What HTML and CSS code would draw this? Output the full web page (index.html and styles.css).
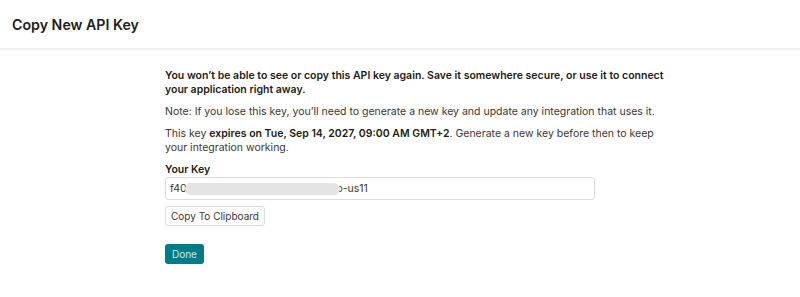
FILE: index.html
```html
<!DOCTYPE html>
<html>
<head>
<meta charset="utf-8">
<link rel="stylesheet" href="styles.css">
</head>
<body>
<header class="top">
  <h1 class="title">Copy New API Key</h1>
</header>
<main class="content">
  <p class="warn">You won’t be able to see or copy this API key again. Save it somewhere secure, or use it to connect your application right away.</p>
  <p class="note">Note: If you lose this key, you’ll need to generate a new key and update any integration that uses it.</p>
  <p class="note">This key <strong>expires on Tue, Sep 14, 2027, 09:00 AM GMT+2</strong>. Generate a new key before then to keep your integration working.</p>
  <label class="label">Your Key</label>
  <div class="field"><span class="k">f40(</span><span class="blur"></span><span class="k">o-us11</span></div>
  <div class="row"><button class="btn">Copy To Clipboard</button></div>
  <div class="row actions"><button class="primary">Done</button></div>
</main>
</body>
</html>
```
FILE: styles.css
```css
* { box-sizing: border-box; }
body {
  margin: 0;
  background: #fff;
  font-family: Inter, "Noto Sans", sans-serif;
  color: #241c15;
}
.top {
  height: 50px;
  border-bottom: 2px solid #eff2f2;
  padding: 0 12px;
  display: flex;
  align-items: center;
}
.title {
  margin: 0;
  font-size: 14.2px;
  font-weight: 600;
  color: #241c15;
}
.content {
  width: 430px;
  margin: 0 0 0 165px;
  padding-top: 19px;
}
.warn {
  margin: 0 0 8px;
  font-size: 10.5px;
  line-height: 14px;
  font-weight: 600;
  width: 510px;
}
.note {
  margin: 0 0 8px;
  font-size: 10.5px;
  line-height: 14px;
  color: #3d3630;
  width: 510px;
}
.note strong { font-weight: 600; color: #241c15; }
.label {
  display: block;
  margin-top: 7px;
  font-size: 10.5px;
  font-weight: 600;
  line-height: 14px;
}
.field {
  margin-top: 0;
  height: 23px;
  border: 1px solid #d9dedf;
  border-radius: 3px;
  display: flex;
  align-items: center;
  padding: 0 4px;
  font-size: 10.5px;
  color: #3d3630;
}
.k { white-space: nowrap; }
.blur {
  width: 155px;
  height: 12px;
  border-radius: 6px;
  background: #e4e4e4;
  margin-left: -5px;
  margin-right: -4px;
  filter: blur(0.6px);
}
.row { display: flex; margin-top: 6px; }
.btn {
  height: 20px;
  padding: 0 5px;
  background: #fff;
  border: 1px solid #d9dedf;
  border-radius: 3px;
  font-family: inherit;
  font-size: 10px;
  color: #3d3630;
}
.row.actions { margin-top: 18px; }
.primary {
  height: 20px;
  padding: 0 7px;
  background: #007c89;
  border: none;
  border-radius: 3px;
  font-family: inherit;
  font-size: 10px;
  color: #cfe8ea;
}
```
